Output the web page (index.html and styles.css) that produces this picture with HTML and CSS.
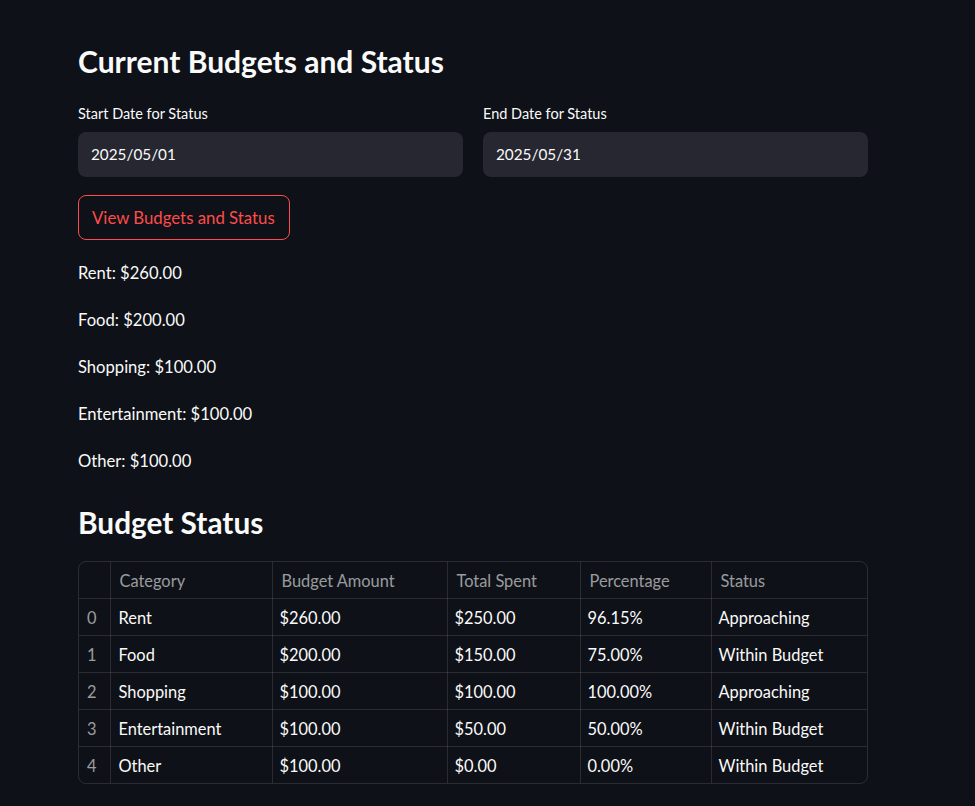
FILE: index.html
```html
<!DOCTYPE html>
<html>
<head>
<meta charset="utf-8">
<link rel="stylesheet" href="styles.css">
</head>
<body>
<main class="main">
  <h2 class="title">Current Budgets and Status</h2>
  <div class="dates">
    <div class="field">
      <label class="label">Start Date for Status</label>
      <div class="input">2025/05/01</div>
    </div>
    <div class="field">
      <label class="label">End Date for Status</label>
      <div class="input">2025/05/31</div>
    </div>
  </div>
  <button class="btn">View Budgets and Status</button>
  <div class="lines">
    <p>Rent: $260.00</p>
    <p>Food: $200.00</p>
    <p>Shopping: $100.00</p>
    <p>Entertainment: $100.00</p>
    <p>Other: $100.00</p>
  </div>
  <h2 class="subtitle">Budget Status</h2>
  <div class="table-wrap">
    <table class="tbl">
      <colgroup>
        <col class="c0"><col class="c1"><col class="c2"><col class="c3"><col class="c4"><col class="c5">
      </colgroup>
      <thead>
        <tr><th></th><th>Category</th><th>Budget Amount</th><th>Total Spent</th><th>Percentage</th><th>Status</th></tr>
      </thead>
      <tbody>
        <tr><td class="idx">0</td><td>Rent</td><td>$260.00</td><td>$250.00</td><td>96.15%</td><td>Approaching</td></tr>
        <tr><td class="idx">1</td><td>Food</td><td>$200.00</td><td>$150.00</td><td>75.00%</td><td>Within Budget</td></tr>
        <tr><td class="idx">2</td><td>Shopping</td><td>$100.00</td><td>$100.00</td><td>100.00%</td><td>Approaching</td></tr>
        <tr><td class="idx">3</td><td>Entertainment</td><td>$100.00</td><td>$50.00</td><td>50.00%</td><td>Within Budget</td></tr>
        <tr><td class="idx">4</td><td>Other</td><td>$100.00</td><td>$0.00</td><td>0.00%</td><td>Within Budget</td></tr>
      </tbody>
    </table>
  </div>
</main>
</body>
</html>
```

FILE: styles.css
```css
html, body {
  margin: 0;
  padding: 0;
  background: #0e1117;
  color: #fafafa;
  font-family: "Lato", "Noto Sans", sans-serif;
}
.main {
  width: 790px;
  margin-left: 78px;
  padding-top: 41px;
}
.title {
  margin: 0;
  font-size: 30px;
  font-weight: 700;
  line-height: 40px;
}
.dates {
  display: flex;
  gap: 20px;
  margin-top: 23px;
}
.field {
  flex: 1;
  display: flex;
  flex-direction: column;
}
.label {
  font-size: 14.5px;
  line-height: 20px;
  margin-bottom: 8px;
}
.input {
  height: 45px;
  background: #262730;
  border-radius: 8px;
  font-size: 15.3px;
  line-height: 45px;
  padding-left: 13px;
}
.btn {
  margin-top: 18px;
  width: 212px;
  height: 45px;
  background: transparent;
  border: 1px solid #ff4b4b;
  border-radius: 8px;
  color: #ff4b4b;
  font-family: inherit;
  font-size: 16.8px;
  text-align: left;
  padding: 0 0 1px 13px;
}
.lines {
  margin-top: 20px;
}
.lines p {
  margin: 0;
  font-size: 16.6px;
  line-height: 27px;
  height: 47px;
}
.subtitle {
  margin: 0;
  margin-top: 8px;
  font-size: 29.8px;
  font-weight: 700;
  line-height: 40px;
}
.table-wrap {
  margin-top: 18px;
  border: 1px solid rgba(250, 250, 250, 0.12);
  border-radius: 8px;
  overflow: hidden;
}
.tbl {
  width: 100%;
  border-collapse: collapse;
  table-layout: fixed;
  font-size: 16.4px;
}
.c0 { width: 31px; }
.c1 { width: 162px; }
.c2 { width: 175px; }
.c3 { width: 133px; }
.c4 { width: 131px; }
.tbl th, .tbl td {
  height: 36px;
  padding: 0 7px;
  text-align: left;
  font-weight: 400;
  border-right: 1px solid rgba(250, 250, 250, 0.12);
  border-bottom: 1px solid rgba(250, 250, 250, 0.12);
  white-space: nowrap;
}
.tbl th:last-child, .tbl td:last-child { border-right: none; }
.tbl tbody tr:last-child td { border-bottom: none; }
.tbl td:nth-child(2) { padding-left: 8px; }
.tbl th { color: rgba(250, 250, 250, 0.6); padding-left: 9px; }
.tbl td.idx { color: rgba(250, 250, 250, 0.6); padding-left: 8px; }
```
